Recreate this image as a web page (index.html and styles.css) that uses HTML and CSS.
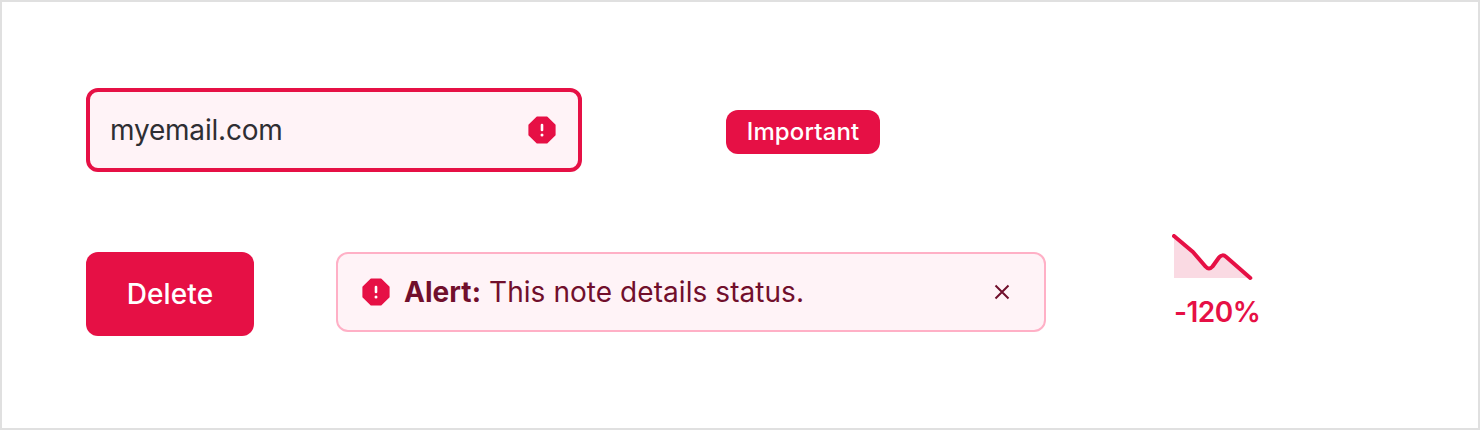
FILE: index.html
```html
<!DOCTYPE html>
<html lang="en">
<head>
  <meta charset="UTF-8" />
  <meta name="viewport" content="width=device-width, initial-scale=1.0" />
  <title>Danger Components</title>
  <link rel="stylesheet" href="styles.css">
</head>
<body>
  <div class="container">
    <div class="row">
      <div class="input-field">
        <input type="text" id="email" value="myemail.com" aria-label="Email" />
        <svg class="alert-icon" viewBox="0 0 28 28">
          <path d="M9.1 1.2h9.8L26.8 9.1v9.8L18.9 26.8H9.1L1.2 18.9V9.1z" fill="#e61045" stroke="#e61045" stroke-width="1.6" stroke-linejoin="round" />
          <path d="M14 9v5" stroke="#fff" stroke-width="2.6" stroke-linecap="round" />
          <circle cx="14" cy="19" r="1.5" fill="#fff" />
        </svg>
      </div>
      <span class="badge">Important</span>
    </div>

    <div class="row">
      <button class="delete-button">Delete</button>

      <div class="alert-box">
        <svg class="alert-icon" viewBox="0 0 28 28">
          <path d="M9.1 1.2h9.8L26.8 9.1v9.8L18.9 26.8H9.1L1.2 18.9V9.1z" fill="#e61045" stroke="#e61045" stroke-width="1.6" stroke-linejoin="round" />
          <path d="M14 9v5" stroke="#fff" stroke-width="2.6" stroke-linecap="round" />
          <circle cx="14" cy="19" r="1.5" fill="#fff" />
        </svg>
        <p class="alert-text"><strong>Alert:</strong> This note details status.</p>
        <svg class="close-icon" viewBox="0 0 16 16">
          <path d="M1.5 1.5l13 13M14.5 1.5l-13 13" stroke="#710f2c" stroke-width="2" />
        </svg>
      </div>

      <div class="stat">
        <svg class="stat-chart" viewBox="0 0 82 48">
          <path d="M2 2L21 18L33.5 32.5Q37 36.5 40.5 32.5L47 23.5Q50.3 19.5 54.3 23L78.3 44H2z" fill="#fadae3" />
          <path d="M2 2L21 18L33.5 32.5Q37 36.5 40.5 32.5L47 23.5Q50.3 19.5 54.3 23L78.3 44" fill="none" stroke="#e61045" stroke-width="4" stroke-linecap="round" stroke-linejoin="round" />
        </svg>
        <span class="stat-value">-120%</span>
      </div>
    </div>
  </div>
</body>
</html>
```

FILE: styles.css
```css
* {
  box-sizing: border-box;
}
body {
  font-family: Inter, sans-serif;
  background-color: #fff;
  margin: 0;
}
.container {
  height: 430px;
  border: 2px solid #e0e0e0;
  padding: 86px 84px 0;
}
.row {
  display: flex;
  align-items: flex-start;
  margin-bottom: 80px;
}
.input-field {
  display: flex;
  align-items: center;
  width: 496px;
  height: 84px;
  padding: 0 22px 0 20px;
  background-color: #fff3f7;
  border: 4px solid #e61045;
  border-radius: 12px;
}
.input-field input {
  flex: 1;
  min-width: 0;
  padding: 0;
  border: none;
  outline: none;
  background: none;
  color: #2e2e33;
  font-family: inherit;
  font-size: 28px;
  letter-spacing: -0.2px;
}
.alert-icon {
  flex: none;
  width: 28px;
  height: 28px;
}
.badge {
  width: 154px;
  height: 44px;
  margin: 22px 0 0 144px;
  background-color: #e61045;
  border-radius: 12px;
  color: #fff;
  font-size: 24px;
  font-weight: 500;
  letter-spacing: 0.12px;
  line-height: 44px;
  text-align: center;
}
.delete-button {
  width: 168px;
  height: 84px;
  padding: 0;
  background-color: #e61045;
  color: #fff;
  border: none;
  border-radius: 12px;
  font-family: inherit;
  font-size: 28px;
  font-weight: 500;
  letter-spacing: 0.1px;
  cursor: pointer;
}
.alert-box {
  display: flex;
  align-items: center;
  width: 710px;
  height: 80px;
  margin-left: 82px;
  padding: 0 34px 0 24px;
  background-color: #fff3f7;
  border: 2px solid #ffb0c6;
  border-radius: 12px;
  color: #710f2c;
}
.alert-text {
  flex: 1;
  margin: 0 0 0 14px;
  font-size: 28px;
  letter-spacing: 0.06px;
}
.close-icon {
  width: 16px;
  height: 16px;
}
.stat {
  margin: -18px 0 0 126px;
}
.stat-chart {
  display: block;
  width: 82px;
  height: 48px;
}
.stat-value {
  display: block;
  margin: 12px 0 0 2px;
  color: #e61045;
  font-size: 28px;
  font-weight: 600;
  letter-spacing: -0.5px;
  line-height: 36px;
}
```
